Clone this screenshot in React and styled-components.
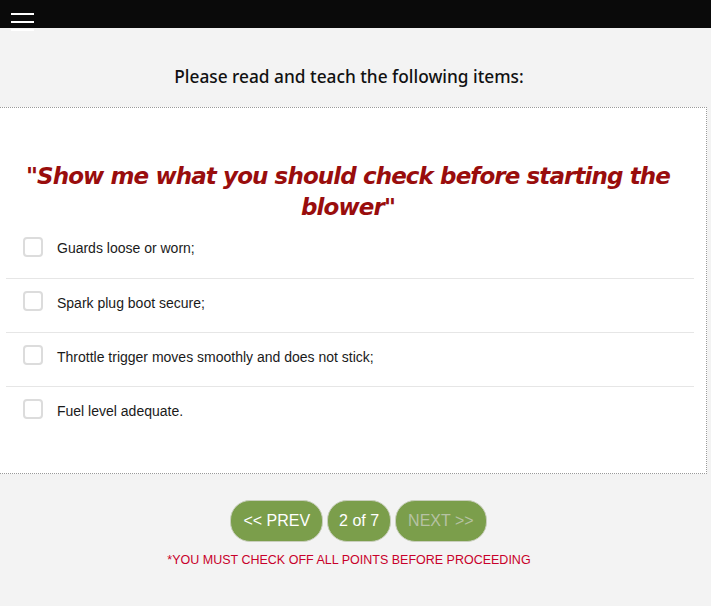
import styled, { createGlobalStyle } from 'styled-components';

const GlobalStyle = createGlobalStyle`
  html, body {
    margin: 0;
    padding: 0;
    background: #f3f3f3;
    overflow: hidden;
  }
  body {
    font-family: "Liberation Sans", Arial, sans-serif;
  }
`;

const Page = styled.div`
  width: 711px;
  min-height: 606px;
  background: #f3f3f3;
`;

const TopBar = styled.div`
  height: 28px;
  background: #0a0a0a;
  position: relative;
`;

const Burger = styled.button`
  position: absolute;
  left: 11px;
  top: 13px;
  width: 23px;
  padding: 0;
  border: 0;
  background: transparent;
  display: flex;
  flex-direction: column;
  gap: 6px;

  span {
    display: block;
    height: 2px;
    background: #fff;
  }
`;

const Intro = styled.h3`
  margin: 0;
  padding: 37px 13px 19px 0;
  text-align: center;
  font-family: "Noto Sans", "Open Sans", sans-serif;
  font-weight: 500;
  font-size: 17.3px;
  line-height: 23px;
  color: #111;
`;

const Card = styled.div`
  margin-left: -1px;
  width: 706px;
  background: #fff;
  border: 1px dotted #9a9a9a;
  padding: 53px 0 33px;
`;

const Title = styled.h2`
  margin: 0 0 1px;
  padding: 0 10px 0 0;
  text-align: center;
  font-family: Verdana, "DejaVu Sans", sans-serif;
  font-style: italic;
  font-weight: 700;
  font-size: 23px;
  letter-spacing: -0.9px;
  line-height: 31px;
  color: #990d0d;
`;

const List = styled.ul`
  list-style: none;
  margin: 0;
  padding: 0 12px 0 6px;
`;

const Item = styled.li`
  display: flex;
  align-items: center;
  height: 54px;
  border-top: ${({ $first }) => ($first ? 'none' : '1px solid #e6e6e6')};
  padding-left: 17px;
  padding-bottom: 6px;
  box-sizing: border-box;
  font-size: 14px;
  color: #1a1a1a;
`;

const Box = styled.span`
  width: 16px;
  height: 16px;
  border: 2px solid #dcdcdc;
  border-radius: 4px;
  flex-shrink: 0;
  margin: 0 14px 3px 0;
  background: #fff;
`;

const Footer = styled.div`
  padding: 26px 13px 0 0;
  display: flex;
  flex-direction: column;
  align-items: center;
`;

const Pager = styled.div`
  display: flex;
  gap: 4px;
  margin-left: 19px;
`;

const PageButton = styled.button`
  height: 42px;
  padding: 0 ${({ $pad }) => $pad}px;
  border: 1px solid #c9cfbd;
  border-radius: 20px;
  background: #7b9e4b;
  color: ${({ $disabled }) => ($disabled ? '#b6c2a3' : '#fff')};
  font-family: "Liberation Sans", Arial, sans-serif;
  font-size: 16px;
`;

const Warning = styled.p`
  margin: 11px 0 0;
  font-size: 12.5px;
  color: #c8002a;
`;

const ITEMS = [
  'Guards loose or worn;',
  'Spark plug boot secure;',
  'Throttle trigger moves smoothly and does not stick;',
  'Fuel level adequate.',
];

export default function App() {
  return (
    <Page>
      <GlobalStyle />
      <TopBar>
        <Burger aria-label="menu">
          <span />
          <span />
          <span />
        </Burger>
      </TopBar>
      <Intro>Please read and teach the following items:</Intro>
      <Card>
        <Title>"Show me what you should check before starting the blower"</Title>
        <List>
          {ITEMS.map((text, i) => (
            <Item key={text} $first={i === 0}>
              <Box />
              {text}
            </Item>
          ))}
        </List>
      </Card>
      <Footer>
        <Pager>
          <PageButton $pad={12}>&lt;&lt; PREV</PageButton>
          <PageButton $pad={11}>2 of 7</PageButton>
          <PageButton $pad={12} $disabled>NEXT &gt;&gt;</PageButton>
        </Pager>
        <Warning>*YOU MUST CHECK OFF ALL POINTS BEFORE PROCEEDING</Warning>
      </Footer>
    </Page>
  );
}
